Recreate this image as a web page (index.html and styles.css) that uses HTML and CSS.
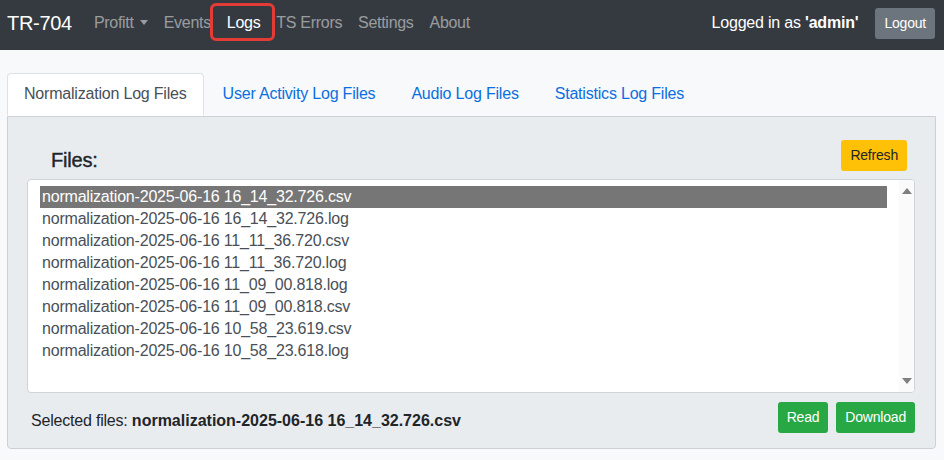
FILE: index.html
```html
<!DOCTYPE html>
<html lang="en">

<head>
    <meta charset="UTF-8">
    <meta name="viewport" content="width=device-width,initial-scale=1.0">
    <title>TR-704 Logs</title>
    <link rel="stylesheet" href="styles.css">
</head>

<body>
    <!-- Top navigation -->
    <nav class="navbar">
        <span class="brand">TR-704</span>
        <a class="nav-link">Profitt <span class="caret"></span></a>
        <a class="nav-link">Events</a>
        <a class="nav-link active marked">Logs</a>
        <a class="nav-link">TS Errors</a>
        <a class="nav-link">Settings</a>
        <a class="nav-link">About</a>
        <div class="user">
            <span class="logged">Logged in as <b>'admin'</b></span>
            <button class="btn btn-grey">Logout</button>
        </div>
    </nav>

    <main class="page">
        <ul class="tabs">
            <li class="tab active">Normalization Log Files</li>
            <li class="tab">User Activity Log Files</li>
            <li class="tab">Audio Log Files</li>
            <li class="tab">Statistics Log Files</li>
        </ul>

        <section class="panel">
            <div class="panel-head">
                <h2 class="files-title">Files:</h2>
                <button class="btn btn-yellow">Refresh</button>
            </div>

            <!-- File list -->
            <div class="filelist">
                <div class="options">
                    <div class="option selected">normalization-2025-06-16 16_14_32.726.csv</div>
                    <div class="option">normalization-2025-06-16 16_14_32.726.log</div>
                    <div class="option">normalization-2025-06-16 11_11_36.720.csv</div>
                    <div class="option">normalization-2025-06-16 11_11_36.720.log</div>
                    <div class="option">normalization-2025-06-16 11_09_00.818.log</div>
                    <div class="option">normalization-2025-06-16 11_09_00.818.csv</div>
                    <div class="option">normalization-2025-06-16 10_58_23.619.csv</div>
                    <div class="option">normalization-2025-06-16 10_58_23.618.log</div>
                </div>
                <div class="scrollbar">
                    <span class="arrow up"></span>
                    <span class="arrow down"></span>
                </div>
            </div>

            <div class="panel-foot">
                <span class="selected-files">Selected files: <b>normalization-2025-06-16 16_14_32.726.csv</b></span>
                <div class="actions">
                    <button class="btn btn-green">Read</button>
                    <button class="btn btn-green">Download</button>
                </div>
            </div>
        </section>
    </main>
</body>

</html>
```

FILE: styles.css
```css
/* Page basics */
* {
    padding: 0;
    margin: 0;
    box-sizing: border-box;
}

body {
    background: #f8f9fa;
    color: #212529;
    font-family: "Liberation Sans", Arial, sans-serif;
    font-size: 16px;
    line-height: 1.5;
    letter-spacing: -0.2px;
}

/* Navbar */
.navbar {
    display: flex;
    align-items: center;
    height: 50px;
    padding: 0 9px 4px 7px;
    background: #343a40;
    letter-spacing: -0.3px;
}

.brand {
    color: #fff;
    font-size: 20px;
    margin-right: 14px;
}

.nav-link {
    position: relative;
    padding: 0 8px;
    color: rgba(255, 255, 255, 0.5);
    cursor: pointer;
}

.nav-link.active {
    color: #fff;
}

.caret {
    display: inline-block;
    vertical-align: 3px;
    margin-left: 2px;
    border-top: 5px solid rgba(255, 255, 255, 0.5);
    border-left: 4px solid transparent;
    border-right: 4px solid transparent;
}

/* red highlight round the Logs link */
.marked::after {
    content: "";
    position: absolute;
    top: -8px;
    bottom: -6px;
    left: -9px;
    right: -7px;
    border: 3px solid #e33b36;
    border-radius: 6px;
}

.user {
    display: flex;
    align-items: center;
    margin-left: auto;
}

.logged {
    color: #fff;
    letter-spacing: -0.2px;
}

/* Buttons */
.btn {
    font-family: inherit;
    font-size: 14px;
    line-height: 21px;
    letter-spacing: -0.2px;
    padding: 4px 8px;
    border: 1px solid transparent;
    border-radius: 3px;
    cursor: pointer;
}

.btn-grey {
    margin-left: 17px;
    background: #6c757d;
    color: #fff;
}

.btn-yellow {
    background: #ffc107;
    color: #212529;
}

.btn-green {
    background: #28a745;
    color: #fff;
}

/* Tabs */
.page {
    padding: 23px 8px 0 7px;
}

.tabs {
    display: flex;
    list-style: none;
}

.tab {
    padding: 8px 16px 9px;
    margin-right: 2px;
    color: #0a6fe0;
    border: 1px solid transparent;
    border-radius: 4px 4px 0 0;
    cursor: pointer;
}

.tab.active {
    background: #fff;
    color: #495057;
    border-color: #dee2e6 #dee2e6 #fff;
}

/* Tab panel */
.panel {
    background: #e9ecef;
    border: 1px solid #cdd1d5;
    border-radius: 0 0 4px 4px;
    padding: 23px 20px 15px 19px;
}

.panel-head {
    display: flex;
    justify-content: space-between;
    align-items: flex-start;
    padding: 0 8px 0 24px;
    margin-bottom: 7px;
}

.files-title {
    font-size: 20px;
    font-weight: 500;
    line-height: 24px;
    padding-top: 8px;
    -webkit-text-stroke: 0.4px #212529;
}

.filelist {
    display: flex;
    height: 214px;
    background: #fff;
    border: 1px solid #ced4da;
    border-radius: 4px;
    overflow: hidden;
}

.options {
    flex: 1;
    padding: 6px 12px 0 12px;
}

.option {
    padding-left: 2px;
    line-height: 22px;
    color: #495057;
    white-space: nowrap;
}

.option.selected {
    background: #767676;
    color: #fff;
}

.scrollbar {
    display: flex;
    flex-direction: column;
    justify-content: space-between;
    align-items: center;
    width: 15px;
    padding: 8px 0 8px;
    background: #fafafa;
}

.arrow {
    border-left: 5px solid transparent;
    border-right: 5px solid transparent;
}

.arrow.up {
    border-bottom: 6px solid #7f7f7f;
}

.arrow.down {
    border-top: 6px solid #7f7f7f;
}

.panel-foot {
    display: flex;
    justify-content: space-between;
    align-items: center;
    margin-top: 9px;
}

.selected-files {
    padding-left: 4px;
    padding-top: 7px;
}

.selected-files b {
    letter-spacing: 0;
}

.actions {
    display: flex;
    gap: 8px;
}
```
